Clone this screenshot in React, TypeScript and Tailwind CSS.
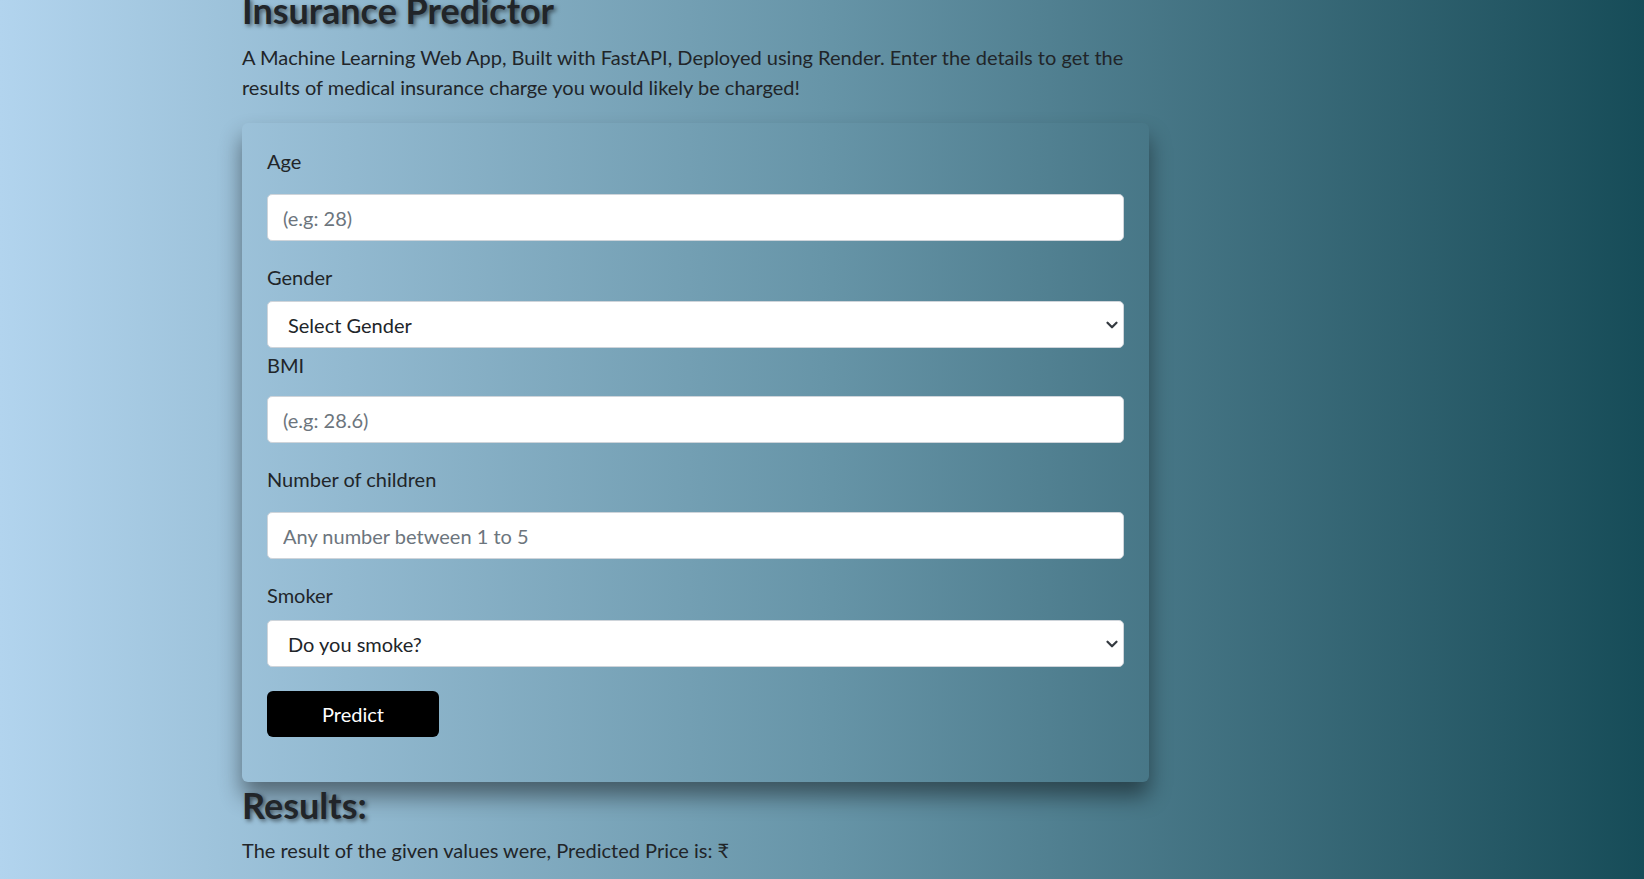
import { ChevronDown } from "lucide-react";

// Label above each field; spacing values differ per field, matching the form's uneven layout
function Field({
  label,
  placeholder,
  labelMt,
  gap,
}: {
  label: string;
  placeholder: string;
  labelMt: string;
  gap: string;
}) {
  return (
    <div className={labelMt}>
      <label className={`block h-[30px] leading-[30px] ${gap}`}>{label}</label>
      <input
        type="text"
        placeholder={placeholder}
        className="block h-[47px] w-full rounded-[5px] border border-[#ced4da] bg-white px-[15px] text-[20px] text-[#212529] outline-none placeholder:text-[#6c757d]"
      />
    </div>
  );
}

function SelectField({
  label,
  value,
  labelMt,
  gap,
}: {
  label: string;
  value: string;
  labelMt: string;
  gap: string;
}) {
  return (
    <div className={labelMt}>
      <label className={`block h-[30px] leading-[30px] ${gap}`}>{label}</label>
      <div className="flex h-[47px] w-full items-center justify-between rounded-[5px] border border-[#ced4da] bg-white pl-[20px] pr-[2px] text-[#212529]">
        <span>{value}</span>
        <ChevronDown size={18} strokeWidth={3} className="text-[#343a40]" />
      </div>
    </div>
  );
}

export default function App() {
  return (
    <main
      className="h-[879px] overflow-hidden bg-linear-to-r from-[#b2d4ee] via-[#6795a8] to-[#164c58] text-[20px] leading-[30px] text-[#212529]"
      style={{ fontFamily: "Lato, 'Noto Sans', 'DejaVu Sans', sans-serif" }}
    >
      <div className="ml-[242px] w-[907px]">
        <h1 className="mt-[-11px] mb-[11px] text-[36px] leading-[42px] font-bold [text-shadow:2px_2px_4px_rgba(0,0,0,0.55)]">
          Insurance Predictor
        </h1>
        <p className="mb-[21px]">
          A Machine Learning Web App, Built with FastAPI, Deployed using Render. Enter the details to get the
          results of medical insurance charge you would likely be charged!
        </p>

        {/* Form card — transparent, only the shadow sets it apart */}
        <form className="rounded-[6px] px-[25px] pt-[23px] pb-[45px] shadow-[0_14px_22px_rgba(0,0,0,0.45)]">
          <Field label="Age" placeholder="(e.g: 28)" labelMt="mt-0" gap="mb-[18px]" />
          <SelectField label="Gender" value="Select Gender" labelMt="mt-[21px]" gap="mb-[9px]" />
          <Field label="BMI" placeholder="(e.g: 28.6)" labelMt="mt-[2px]" gap="mb-[16px]" />
          <Field label="Number of children" placeholder="Any number between 1 to 5" labelMt="mt-[21px]" gap="mb-[18px]" />
          <SelectField label="Smoker" value="Do you smoke?" labelMt="mt-[21px]" gap="mb-[10px]" />
          <button
            type="button"
            className="mt-[24px] h-[46px] w-[172px] rounded-[6px] bg-black text-[20px] text-white"
          >
            Predict
          </button>
        </form>

        <h2 className="mt-[2px] mb-[9px] text-[36px] leading-[42px] font-bold [text-shadow:2px_2px_4px_rgba(0,0,0,0.55)]">
          Results:
        </h2>
        <p>The result of the given values were, Predicted Price is: ₹</p>
      </div>
    </main>
  );
}
